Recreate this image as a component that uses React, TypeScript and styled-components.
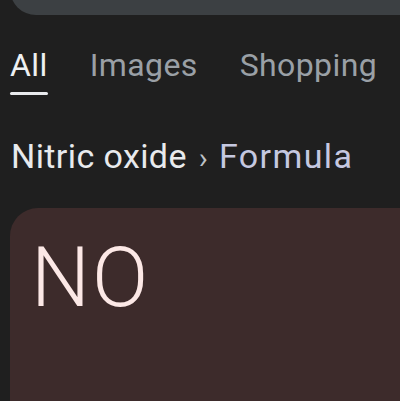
import React from "react";
import styled, { createGlobalStyle } from "styled-components";

const Global = createGlobalStyle`
  html, body { margin: 0; padding: 0; background: #1f1f1f; overflow: hidden; }
  body { font-family: Roboto, "Noto Sans", Arial, sans-serif; }
`;

const Page = styled.div`
  width: 400px;
  height: 401px;
  background: #1f1f1f;
  display: flex;
  flex-direction: column;
  overflow: hidden;
`;

const SearchBar = styled.div`
  margin: -25px 0 0 10px;
  height: 40px;
  background: #3c4043;
  border-bottom-left-radius: 26px;
  flex-shrink: 0;
`;

const Tabs = styled.nav`
  display: flex;
  gap: 42px;
  padding: 30px 0 0 10px;
`;

const Tab = styled.div<{ $active?: boolean }>`
  display: flex;
  flex-direction: column;
  align-items: stretch;
  font-size: 32px;
  line-height: 40px;
  letter-spacing: 0.4px;
  font-weight: 400;
  color: ${(p) => (p.$active ? "#eef0f2" : "#9aa0a6")};
  white-space: nowrap;
`;

const Underline = styled.div<{ $active?: boolean }>`
  height: 3px;
  margin-top: 7px;
  border-radius: 2px;
  background: ${(p) => (p.$active ? "#e8eaed" : "transparent")};
`;

const Crumbs = styled.div`
  display: flex;
  align-items: baseline;
  padding: 41px 0 0 11px;
  font-size: 34px;
  line-height: 40px;
  white-space: nowrap;
`;

const Crumb = styled.span<{ $tone: "main" | "sub" }>`
  color: ${(p) => (p.$tone === "main" ? "#e8eaed" : "#c5c8e0")};
  letter-spacing: ${(p) => (p.$tone === "main" ? "0.4px" : "1.4px")};
`;

const Sep = styled.span`
  color: #bdc1c6;
  margin: 0 11px 0 12px;
  font-size: 30px;
`;

const Card = styled.div`
  margin: 30px 0 0 10px;
  flex: 1;
  background: #3d2b2b;
  border-top-left-radius: 28px;
  padding: 29px 0 0 21px;
`;

const Formula = styled.div`
  font-size: 83px;
  line-height: 82px;
  font-weight: 300;
  letter-spacing: 2px;
  color: #fce8e6;
`;

export default function App() {
  return (
    <Page>
      <Global />
      <SearchBar />
      <Tabs>
        <Tab $active>
          All
          <Underline $active />
        </Tab>
        <Tab>
          Images
          <Underline />
        </Tab>
        <Tab>
          Shopping
          <Underline />
        </Tab>
      </Tabs>
      <Crumbs>
        <Crumb $tone="main">Nitric oxide</Crumb>
        <Sep>›</Sep>
        <Crumb $tone="sub">Formula</Crumb>
      </Crumbs>
      <Card>
        <Formula>NO</Formula>
      </Card>
    </Page>
  );
}
